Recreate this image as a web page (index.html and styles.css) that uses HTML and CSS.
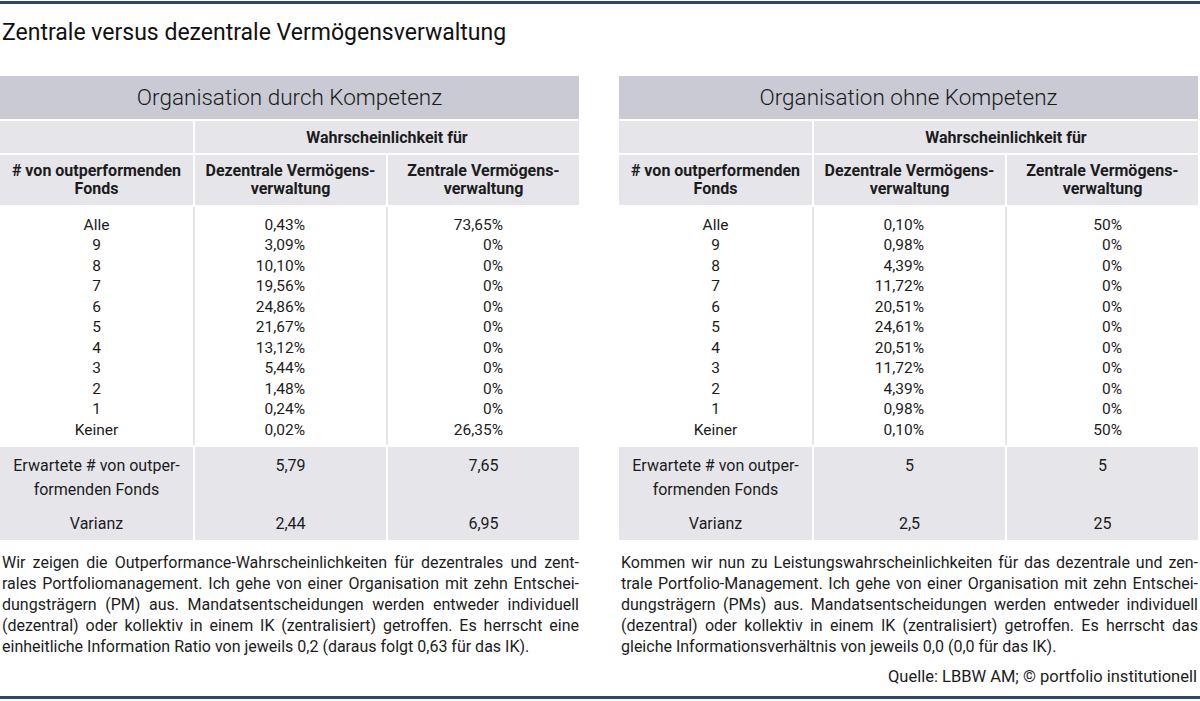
FILE: index.html
```html
<!DOCTYPE html>
<html lang="de">
<head>
<meta charset="utf-8">
<title>Zentrale versus dezentrale Vermögensverwaltung</title>
<link rel="stylesheet" href="styles.css">
</head>
<body>
<div class="page">
  <div class="rule top"></div>
  <h1 class="title">Zentrale versus dezentrale Vermögensverwaltung</h1>
  <div class="panels">
    <section class="panel">
      <div class="tbl">
        <div class="band">Organisation durch Kompetenz</div>
        <div class="cell sub"></div>
        <div class="cell sub wide">Wahrscheinlichkeit für</div>
        <div class="cell head">#&nbsp;von outperformenden<br>Fonds</div>
        <div class="cell head">Dezentrale Vermögens-<br>verwaltung</div>
        <div class="cell head">Zentrale Vermögens-<br>verwaltung</div>
        <div class="data lab">Alle<br>9<br>8<br>7<br>6<br>5<br>4<br>3<br>2<br>1<br>Keiner</div>
        <div class="data v2">0,43%<br>3,09%<br>10,10%<br>19,56%<br>24,86%<br>21,67%<br>13,12%<br>5,44%<br>1,48%<br>0,24%<br>0,02%</div>
        <div class="data v3">73,65%<br>0%<br>0%<br>0%<br>0%<br>0%<br>0%<br>0%<br>0%<br>0%<br>26,35%</div>
        <div class="cell foot"><div class="exp">Erwartete # von outper-<br>formenden Fonds</div><div class="var">Varianz</div></div>
        <div class="cell foot"><div class="exp">5,79</div><div class="var">2,44</div></div>
        <div class="cell foot"><div class="exp">7,65</div><div class="var">6,95</div></div>
      </div>
      <p class="cap">
        <span class="ln">Wir zeigen die Outperformance-Wahrscheinlichkeiten für dezentrales und zent-</span>
        <span class="ln">rales Portfoliomanagement. Ich gehe von einer Organisation mit zehn Entschei-</span>
        <span class="ln">dungsträgern (PM) aus. Mandatsentscheidungen werden entweder individuell</span>
        <span class="ln">(dezentral) oder kollektiv in einem IK (zentralisiert) getroffen. Es herrscht eine</span>
        <span class="ln last">einheitliche Information Ratio von jeweils 0,2 (daraus folgt 0,63 für das IK).</span>
      </p>
    </section>
    <section class="panel">
      <div class="tbl">
        <div class="band">Organisation ohne Kompetenz</div>
        <div class="cell sub"></div>
        <div class="cell sub wide">Wahrscheinlichkeit für</div>
        <div class="cell head">#&nbsp;von outperformenden<br>Fonds</div>
        <div class="cell head">Dezentrale Vermögens-<br>verwaltung</div>
        <div class="cell head">Zentrale Vermögens-<br>verwaltung</div>
        <div class="data lab">Alle<br>9<br>8<br>7<br>6<br>5<br>4<br>3<br>2<br>1<br>Keiner</div>
        <div class="data v2">0,10%<br>0,98%<br>4,39%<br>11,72%<br>20,51%<br>24,61%<br>20,51%<br>11,72%<br>4,39%<br>0,98%<br>0,10%</div>
        <div class="data v3">50%<br>0%<br>0%<br>0%<br>0%<br>0%<br>0%<br>0%<br>0%<br>0%<br>50%</div>
        <div class="cell foot"><div class="exp">Erwartete # von outper-<br>formenden Fonds</div><div class="var">Varianz</div></div>
        <div class="cell foot"><div class="exp">5</div><div class="var">2,5</div></div>
        <div class="cell foot"><div class="exp">5</div><div class="var">25</div></div>
      </div>
      <p class="cap">
        <span class="ln">Kommen wir nun zu Leistungswahrscheinlichkeiten für das dezentrale und zen-</span>
        <span class="ln">trale Portfolio-Management. Ich gehe von einer Organisation mit zehn Entschei-</span>
        <span class="ln">dungsträgern (PMs) aus. Mandatsentscheidungen werden entweder individuell</span>
        <span class="ln">(dezentral) oder kollektiv in einem IK (zentralisiert) getroffen. Es herrscht das</span>
        <span class="ln last">gleiche Informationsverhältnis von jeweils 0,0 (0,0 für das IK).</span>
      </p>
    </section>
  </div>
  <div class="source">Quelle: LBBW AM; © portfolio institutionell</div>
  <div class="rule bottom"></div>
</div>
</body>
</html>
```

FILE: styles.css
```css
* { box-sizing: border-box; }
html, body { margin: 0; padding: 0; background: #fff; }
body {
  font-family: Roboto, "Liberation Sans", sans-serif;
  color: #1c1c1c;
}
.page { width: 1200px; height: 701px; overflow: hidden; }
.rule { height: 3px; background: #2c4a6d; }
.rule.top { margin-top: 1px; }
.rule.bottom { margin-top: 9px; }
.title {
  margin: 17px 0 0 2px;
  font-size: 23px;
  line-height: 24px;
  font-weight: 400;
  color: #111;
}
.panels {
  display: flex;
  gap: 40px;
  margin-top: 31px;
  align-items: flex-start;
}
.panel { width: 579px; }
.tbl {
  display: grid;
  grid-template-columns: 193px 191px 191px;
  gap: 2px;
}
.band {
  grid-column: 1 / 4;
  height: 43px;
  background: #c9cad3;
  display: flex;
  align-items: center;
  justify-content: center;
  font-size: 22.5px;
  font-weight: 300;
  color: #1a1a1a;
  padding-bottom: 1px;
}
.cell {
  background: #e5e5ea;
  display: flex;
  align-items: center;
  justify-content: center;
  text-align: center;
}
.sub { height: 32px; font-size: 16px; font-weight: 700; }
.wide { grid-column: 2 / 4; }
.head { height: 50px; font-size: 16px; font-weight: 700; line-height: 18px; }
.data {
  height: 238px;
  padding-top: 8px;
  font-size: 15.5px;
  line-height: 20.45px;
  background: #fff;
}
.lab { text-align: center; box-shadow: 2px 0 0 #e5e5ea; }
.v2 { text-align: right; padding-right: 81px; box-shadow: 2px 0 0 #e5e5ea; }
.v3 { text-align: right; padding-right: 76px; }
.foot {
  height: 93px;
  flex-direction: column;
  justify-content: flex-start;
  padding-top: 7px;
  font-size: 16px;
  line-height: 24px;
}
.exp { height: 58px; }
.var { line-height: 24px; }
.cap {
  margin: 12px 0 0 2px;
  font-size: 16px;
  line-height: 21px;
  color: #1c1c1c;
}
.ln { display: block; text-align: justify; text-align-last: justify; white-space: nowrap; }
.ln.last { text-align-last: left; }
.source {
  margin-top: 10px;
  text-align: right;
  padding-right: 3px;
  font-size: 16.5px;
  line-height: 20px;
}
```
